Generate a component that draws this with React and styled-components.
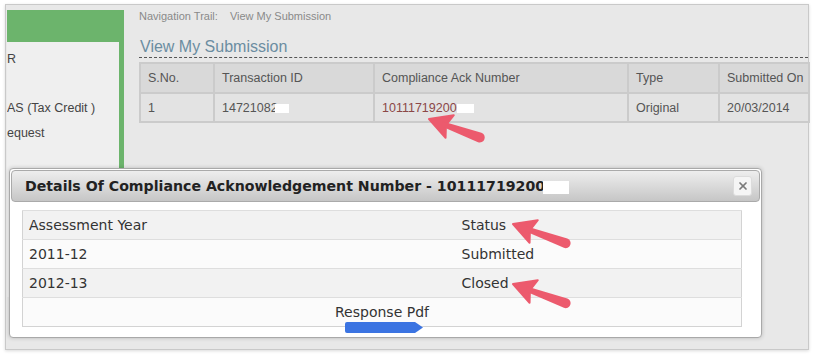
import React from 'react';
import styled, { createGlobalStyle } from 'styled-components';
import { X } from 'lucide-react';

const GlobalStyle = createGlobalStyle`
  html, body {
    margin: 0;
    padding: 0;
    background: #fff;
  }
  body {
    font-family: "Liberation Sans", Arial, sans-serif;
  }
`;

const Page = styled.div`
  position: relative;
  width: 816px;
  height: 355px;
  overflow: hidden;
  background: #fff;
  padding: 4px 0 0 5px;
  box-sizing: border-box;
`;

const Frame = styled.div`
  position: relative;
  box-sizing: border-box;
  width: 804px;
  height: 346px;
  border: 1px solid #c9c9c9;
  background: #e8e8e8;
  box-shadow: 0 1px 3px rgba(0, 0, 0, 0.15);
  display: grid;
  grid-template-columns: 118px 1fr;
  align-items: start;
`;

const Sidebar = styled.aside`
  margin: 5px 0 0 1px;
  display: flex;
  flex-direction: column;
`;

const SidebarBand = styled.div`
  height: 32px;
  background: #6cb46c;
`;

const SidebarMenu = styled.ul`
  list-style: none;
  margin: 0;
  padding: 5px 0 0;
  height: 250px;
  background: #efefef;
  border-right: 5px solid #6cb46c;
  overflow: hidden;
`;

const MenuItem = styled.li`
  height: 24.7px;
  line-height: 24px;
  font-size: 12.5px;
  color: #444;
  white-space: nowrap;
`;

const Main = styled.main`
  padding: 0 0 0 15px;
  min-width: 0;
`;

const NavTrail = styled.div`
  padding-top: 4px;
  line-height: 14px;
  font-size: 11px;
  color: #8a8a8a;
`;

const TrailCurrent = styled.span`
  margin-left: 12px;
`;

const Heading = styled.h2`
  margin: 14px 0 0;
  padding-left: 1px;
  font-weight: normal;
  font-size: 16px;
  line-height: 20px;
  color: #6b8da1;
  border-bottom: 1px dashed #555;
`;

const DataTable = styled.table`
  margin-top: 4px;
  width: 100%;
  border-collapse: collapse;
  table-layout: fixed;
  font-size: 12.5px;
  color: #555;
  border: 2px solid #cbcbcb;
`;

const HeadCell = styled.th`
  height: 28px;
  padding: 0 7px;
  text-align: left;
  font-weight: normal;
  background: #d9d9d9;
  border: 2px solid #cbcbcb;
  white-space: nowrap;
`;

const Cell = styled.td`
  height: 26px;
  padding: 1px 7px 0;
  background: #e3e3e3;
  border: 2px solid #cbcbcb;
  white-space: nowrap;
`;

const AckLink = styled.span`
  color: #8b4747;
`;

const Redact = styled.span`
  display: inline-block;
  vertical-align: middle;
  width: ${p => p.$w}px;
  height: ${p => p.$h}px;
  margin-left: ${p => p.$ml || 0}px;
  background: #fff;
`;

const Dialog = styled.div`
  position: absolute;
  left: 3px;
  top: 163px;
  width: 753px;
  height: 170px;
  box-sizing: border-box;
  padding: 1px;
  border: 1px solid #a9a9a9;
  border-radius: 4px;
  background: #fff;
  box-shadow: 0 0 4px rgba(0, 0, 0, 0.2);
  font-family: "DejaVu Sans", Verdana, sans-serif;
`;

const TitleBar = styled.div`
  height: 32px;
  box-sizing: border-box;
  display: flex;
  align-items: center;
  justify-content: space-between;
  padding: 0 7px 0 13px;
  border: 1px solid #aaa;
  border-radius: 4px;
  background: linear-gradient(#eeeeee, #c6c6c6);
`;

const Title = styled.span`
  font-weight: bold;
  font-size: 14.15px;
  color: #222;
  white-space: nowrap;
`;

const CloseButton = styled.button`
  width: 19px;
  height: 20px;
  padding: 0;
  display: flex;
  align-items: center;
  justify-content: center;
  border: 1px solid #dcdcdc;
  border-radius: 3px;
  background: #f5f5f5;
  color: #7a7a7a;
`;

const DialogBody = styled.div`
  padding: 8px 16px 0 11px;
`;

const DetailTable = styled.table`
  width: 720px;
  border-collapse: collapse;
  table-layout: fixed;
  font-size: 14px;
  color: #333;
  border: 1px solid #d3d3d3;
`;

const DetailCell = styled.td`
  height: 28px;
  padding: 0 6px;
  background: ${p => (p.$alt ? '#fbfbfb' : '#f2f2f2')};
  border-top: 1px solid #dedede;
  text-align: ${p => (p.$center ? 'center' : 'left')};
`;

const Annotations = styled.svg`
  position: absolute;
  left: 0;
  top: 0;
  pointer-events: none;
`;

const Arrow = ({ x, y, angle, length = 56 }) => (
  <g transform={`translate(${x} ${y}) rotate(${angle})`} fill="#ec5a6d">
    <path d="M0 0 L22 -12 L18 0 L22 12 Z" strokeLinejoin="round" stroke="#ec5a6d" strokeWidth="2" />
    <path d={`M14 -2.5 L${length} -5 A5 5 0 0 1 ${length} 5 L14 2.5 Z`} />
  </g>
);

const rows = [
  { year: '2011-12', status: 'Submitted', alt: true },
  { year: '2012-13', status: 'Closed', alt: false },
];

export default function App() {
  return (
    <>
      <GlobalStyle />
      <Page>
        <Frame>
          <Sidebar>
            <SidebarBand />
            <SidebarMenu>
              <MenuItem>R</MenuItem>
              <MenuItem />
              <MenuItem>AS (Tax Credit )</MenuItem>
              <MenuItem>equest</MenuItem>
            </SidebarMenu>
          </Sidebar>

          <Main>
            <NavTrail>
              Navigation Trail:<TrailCurrent>View My Submission</TrailCurrent>
            </NavTrail>
            <Heading>View My Submission</Heading>
            <DataTable>
              <colgroup>
                <col style={{ width: 74 }} />
                <col style={{ width: 160 }} />
                <col style={{ width: 254 }} />
                <col style={{ width: 91 }} />
                <col style={{ width: 90 }} />
              </colgroup>
              <thead>
                <tr>
                  <HeadCell>S.No.</HeadCell>
                  <HeadCell>Transaction ID</HeadCell>
                  <HeadCell>Compliance Ack Number</HeadCell>
                  <HeadCell>Type</HeadCell>
                  <HeadCell>Submitted On</HeadCell>
                </tr>
              </thead>
              <tbody>
                <tr>
                  <Cell>1</Cell>
                  <Cell>14721082<Redact $w={14} $h={9} $ml={-3} /></Cell>
                  <Cell><AckLink>10111719200</AckLink><Redact $w={17} $h={9} /></Cell>
                  <Cell>Original</Cell>
                  <Cell>20/03/2014</Cell>
                </tr>
              </tbody>
            </DataTable>
          </Main>

          <Dialog>
            <TitleBar>
              <Title>
                Details Of Compliance Acknowledgement Number - 10111719200
                <Redact $w={26} $h={13} $ml={-2} />
              </Title>
              <CloseButton>
                <X size={12} strokeWidth={3.5} />
              </CloseButton>
            </TitleBar>
            <DialogBody>
              <DetailTable>
                <colgroup>
                  <col style={{ width: 433 }} />
                  <col />
                </colgroup>
                <tbody>
                  <tr>
                    <DetailCell>Assessment Year</DetailCell>
                    <DetailCell>Status</DetailCell>
                  </tr>
                  {rows.map(r => (
                    <tr key={r.year}>
                      <DetailCell $alt={r.alt}>{r.year}</DetailCell>
                      <DetailCell $alt={r.alt}>{r.status}</DetailCell>
                    </tr>
                  ))}
                  <tr>
                    <DetailCell $alt $center colSpan={2}>Response Pdf</DetailCell>
                  </tr>
                </tbody>
              </DetailTable>
            </DialogBody>
          </Dialog>
        </Frame>

        <Annotations width="816" height="355" viewBox="0 0 816 355">
          <Arrow x={429} y={119} angle={20} length={54} />
          <Arrow x={513} y={224} angle={20} length={56} />
          <Arrow x={513} y={284} angle={20} length={56} />
          <path d="M347 322 L415 322 L423 327.5 L415 333 L347 333 Q345 333 345 331 L345 324 Q345 322 347 322 Z" fill="#3b74e2" />
        </Annotations>
      </Page>
    </>
  );
}
